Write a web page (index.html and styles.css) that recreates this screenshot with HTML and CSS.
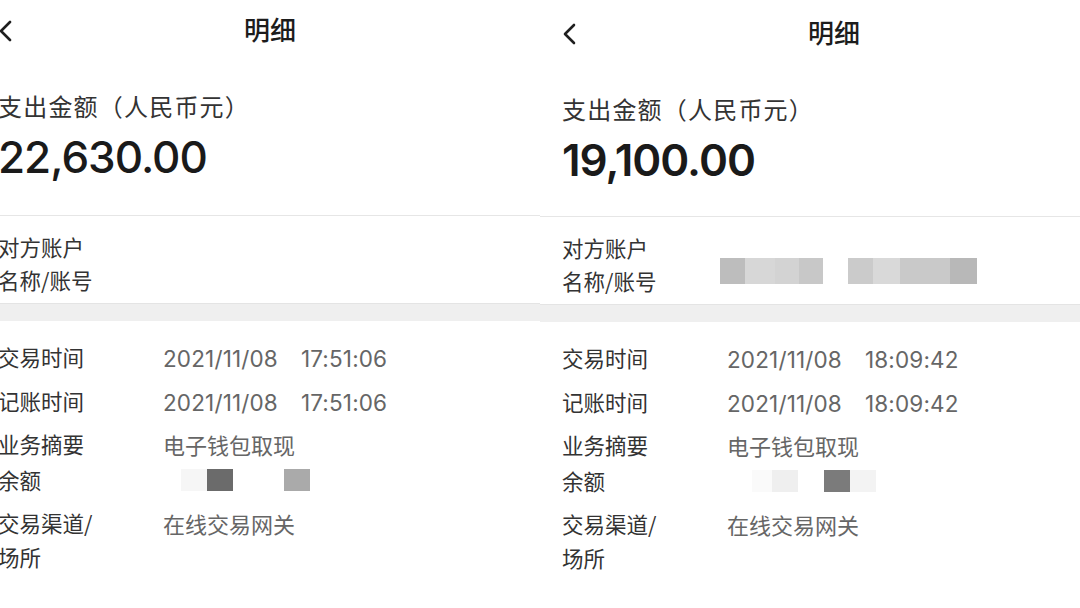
FILE: index.html
```html
<!DOCTYPE html>
<html lang="zh-CN">
<head>
<meta charset="utf-8">
<title>明细</title>
<link rel="stylesheet" href="styles.css">
</head>
<body>
<main class="stage">
  <section class="panel panel-left">
    <div class="screen">
      <header class="nav">
        <svg class="back" viewBox="0 0 14 22" width="14" height="22"><polyline points="12,2 3,11 12,20" fill="none" stroke="#1f1f1f" stroke-width="2.6" stroke-linecap="round" stroke-linejoin="round"/></svg>
        <h1 class="title">明细</h1>
        <span class="nav-spacer"></span>
      </header>
      <div class="amount-block">
        <div class="amount-label">支出金额（人民币元）</div>
        <div class="amount">22,630.00</div>
      </div>
      <div class="account">
        <div class="label">对方账户<br>名称/账号</div>
      </div>
      <div class="band"></div>
      <div class="details">
        <div class="row"><div class="label">交易时间</div><div class="value"><span class="num">2021/11/08</span><span class="num time">17:51:06</span></div></div>
        <div class="row"><div class="label">记账时间</div><div class="value"><span class="num">2021/11/08</span><span class="num time">17:51:06</span></div></div>
        <div class="row"><div class="label">业务摘要</div><div class="value">电子钱包取现</div></div>
        <div class="row row-tight"><div class="label">余额</div>
          <div class="value masked masked-l">
            <span class="px c-f6"></span><span class="px c-6b"></span><span class="px gap-51"></span><span class="px c-aa"></span>
          </div>
        </div>
        <div class="row row-loose"><div class="label">交易渠道/<br>场所</div><div class="value">在线交易网关</div></div>
      </div>
    </div>
  </section>

  <section class="panel panel-right">
    <div class="screen">
      <header class="nav">
        <svg class="back" viewBox="0 0 14 22" width="14" height="22"><polyline points="12,2 3,11 12,20" fill="none" stroke="#1f1f1f" stroke-width="2.6" stroke-linecap="round" stroke-linejoin="round"/></svg>
        <h1 class="title">明细</h1>
        <span class="nav-spacer"></span>
      </header>
      <div class="amount-block">
        <div class="amount-label">支出金额（人民币元）</div>
        <div class="amount amount-bold">19,100.00</div>
      </div>
      <div class="account">
        <div class="label">对方账户<br>名称/账号</div>
        <div class="acct-mask">
          <span class="seg w25 c-bd"></span><span class="seg w30 c-d6"></span><span class="seg w24 c-d4"></span><span class="seg w24 c-c8"></span>
          <span class="seg-gap"></span>
          <span class="seg w25 c-cb"></span><span class="seg w27 c-d8"></span><span class="seg w50 c-c9"></span><span class="seg w27 c-b8"></span>
        </div>
      </div>
      <div class="band"></div>
      <div class="details">
        <div class="row"><div class="label">交易时间</div><div class="value"><span class="num">2021/11/08</span><span class="num time">18:09:42</span></div></div>
        <div class="row"><div class="label">记账时间</div><div class="value"><span class="num">2021/11/08</span><span class="num time">18:09:42</span></div></div>
        <div class="row"><div class="label">业务摘要</div><div class="value">电子钱包取现</div></div>
        <div class="row row-tight"><div class="label">余额</div>
          <div class="value masked masked-r">
            <span class="px w20 c-fa"></span><span class="px c-ef"></span><span class="px gap-26"></span><span class="px c-7b"></span><span class="px c-f3"></span>
          </div>
        </div>
        <div class="row row-loose"><div class="label">交易渠道/<br>场所</div><div class="value">在线交易网关</div></div>
      </div>
    </div>
  </section>
</main>
</body>
</html>
```

FILE: styles.css
```css
* { box-sizing: border-box; }

html, body {
  margin: 0;
  padding: 0;
  background: #ffffff;
}

body {
  font-family: "Noto Sans CJK SC", "Noto Sans", sans-serif;
  color: #333333;
}

.stage {
  display: flex;
  width: 1080px;
  height: 608px;
  overflow: hidden;
}

.panel {
  flex: none;
  width: 540px;
  height: 608px;
  overflow: hidden;
  background: #ffffff;
}

.screen {
  width: 588px;
}

.panel-left .screen {
  margin-left: -24px;
}

.panel-right .screen {
  padding-top: 3px;
}

/* nav */
.nav {
  display: grid;
  grid-template-columns: 1fr auto 1fr;
  align-items: center;
  height: 58px;
  padding: 0 22px;
}

.back {
  display: block;
  margin-top: 4px;
}

.title {
  margin: 0;
  font-size: 26px;
  font-weight: 500;
  line-height: 58px;
  color: #1c1c1c;
}

/* amount */
.amount-block {
  padding: 31px 22px 36px;
  border-bottom: 1px solid #e6e6e6;
}

.panel-right .amount-block {
  padding-bottom: 34px;
}

.amount-label {
  font-size: 24px;
  letter-spacing: 1.2px;
  line-height: 34px;
  color: #333333;
}

.amount {
  margin-top: 12px;
  font-family: "Inter", "Roboto", sans-serif;
  font-size: 44px;
  font-weight: 500;
  letter-spacing: -1px;
  line-height: 44px;
  color: #1a1a1a;
}

.amount-bold {
  font-weight: 600;
}

/* account */
.account {
  display: flex;
  align-items: flex-start;
  padding: 14px 22px 7px;
}

.label {
  flex: none;
  width: 165px;
  font-size: 21.5px;
  line-height: 33px;
  color: #333333;
}

.acct-mask {
  display: flex;
  margin-top: 27px;
  margin-left: -7px;
  height: 26px;
}

.seg { display: block; height: 26px; }
.seg-gap { display: block; width: 25px; }
.w20 { width: 20px; }
.w24 { width: 24px; }
.w25 { width: 25px; }
.w27 { width: 27px; }
.w30 { width: 30px; }
.w50 { width: 50px; }

.c-bd { background: #bdbdbd; }
.c-d6 { background: #d7d7d7; }
.c-d4 { background: #d3d3d3; }
.c-c8 { background: #c8c8c8; }
.c-cb { background: #cbcbcb; }
.c-d8 { background: #d9d9d9; }
.c-c9 { background: #c9c9c9; }
.c-b8 { background: #b8b8b8; }

/* band */
.band {
  height: 18px;
  background: #efefef;
  border-top: 1px solid #e4e4e4;
}

/* details */
.details {
  padding: 19px 22px 0;
}

.row {
  display: flex;
  align-items: flex-start;
  margin-bottom: 9.5px;
}

.row .label {
  line-height: 34px;
}

.row-tight {
  margin-top: -8px;
}

.row-loose {
  margin-top: 2px;
}

.value {
  height: 34px;
  font-size: 22px;
  line-height: 34px;
  white-space: nowrap;
  color: #666666;
}

.num {
  font-family: "Inter", "Roboto", sans-serif;
  font-size: 22.5px;
  letter-spacing: 0.15px;
  color: #666666;
}

.time {
  margin-left: 23px;
}

.masked {
  display: flex;
  align-items: center;
}

.masked-l { padding-left: 18px; }
.masked-r { padding-left: 25px; }

.px {
  display: block;
  width: 26px;
  height: 22px;
}

.gap-51 { width: 51px; }
.gap-26 { width: 26px; }
.px.w20 { width: 20px; }

.c-f6 { background: #f6f6f6; }
.c-6b { background: #6b6b6b; }
.c-aa { background: #aaaaaa; }
.c-fa { background: #fafafa; }
.c-ef { background: #efefef; }
.c-7b { background: #7b7b7b; }
.c-f3 { background: #f3f3f3; }
```
